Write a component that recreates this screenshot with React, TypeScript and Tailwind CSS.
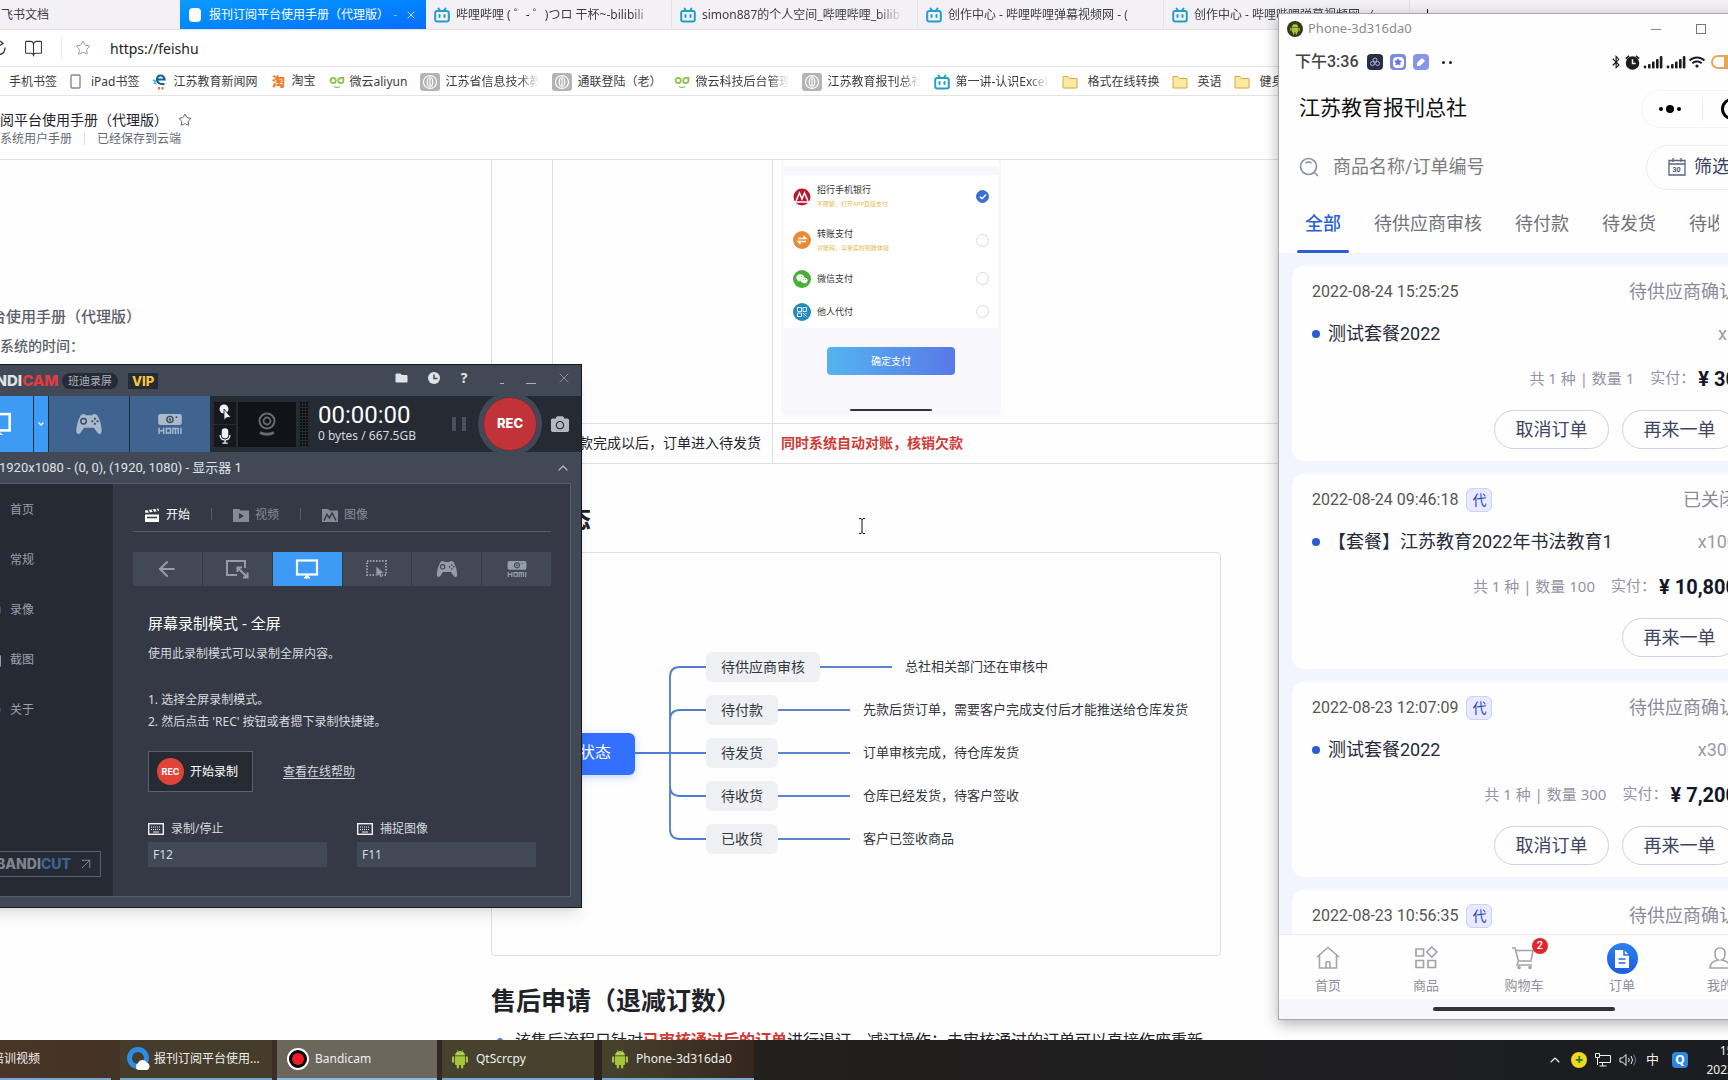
import React from 'react';
import {
  ArrowLeft,
  ArrowUpRight,
  BookOpen,
  Check,
  ChevronDown,
  ChevronUp,
  CircleHelp,
  House,
  Settings,
  Star,
  Video,
  X,
} from 'lucide-react';
import { FaBluetoothB, FaCamera, FaFolder, FaWeixin, FaWifi } from 'react-icons/fa';

/* ---------- icons ---------- */

const BiliIcon = () => (
  <svg viewBox="0 0 16 16" className="h-4 w-4 shrink-0" fill="none" stroke="#23a0c8" strokeWidth="2">
    <path d="M4.500 1.500l1.500 2M11.500 1.500l-1.500 2" strokeLinecap="round" />
    <rect x="1.200" y="4" width="13.600" height="10.500" rx="2" />
    <path d="M5.500 8v2M10.500 8v2" strokeLinecap="round" />
  </svg>
);

const AndroidIcon = ({ className }: { className: string }) => (
  <svg viewBox="0 0 16 20" className={className} fill="#a4c639">
    <path d="M3 6.500a5 4.500 0 0110 0zM3 7.300h10v7.700q0 1-1 1H4q-1 0-1-1z" />
    <rect x="0" y="7.300" width="2.200" height="6.500" rx="1.100" />
    <rect x="13.800" y="7.300" width="2.200" height="6.500" rx="1.100" />
    <rect x="4.700" y="13" width="2.300" height="6.500" rx="1.100" />
    <rect x="9" y="13" width="2.300" height="6.500" rx="1.100" />
    <path d="M5 .8l1.200 2M11 .8l-1.200 2" stroke="#a4c639" strokeWidth=".7" />
    <circle cx="5.900" cy="4.600" r=".6" fill="#fff" />
    <circle cx="10.100" cy="4.600" r=".6" fill="#fff" />
  </svg>
);

const PadIcon = ({ className }: { className: string }) => (
  <svg viewBox="0 0 28 22" className={className}>
    <path
      d="M5 1.500q1.500-1.500 4-1.500l1.500 1.500h7L19 0q2.500 0 4 1.500Q27.500 9 28 18q0 4-2.500 4-1.500 0-3-2.500L19.500 15h-11l-3 4.500Q4 22 2.500 22 0 22 0 18 .5 9 5 1.500z"
      fill="currentColor"
    />
    <circle cx="8" cy="8" r="3" fill="none" stroke="#3b4a60" strokeWidth="1.600" />
    <g fill="#3b4a60">
      <circle cx="20.500" cy="5.200" r="1.200" />
      <circle cx="20.500" cy="10.800" r="1.200" />
      <circle cx="17.700" cy="8" r="1.200" />
      <circle cx="23.300" cy="8" r="1.200" />
    </g>
  </svg>
);

const GlobeIcon = () => (
  <svg viewBox="0 0 20 18" className="h-[18px] w-5 shrink-0">
    <rect width="20" height="18" rx="3" fill="#b4b4b4" />
    <g fill="none" stroke="#fff" strokeWidth="1.200">
      <circle cx="10" cy="9" r="6.500" />
      <path d="M8.500 4.500q-2.500 4.500 0 9M11.500 4.500q2.500 4.500 0 9M10 3v12" />
    </g>
  </svg>
);

const OwlIcon = () => (
  <svg viewBox="0 0 16 14" className="h-[14px] w-4 shrink-0" fill="none" stroke="#8bc34a" strokeWidth="1.800">
    <ellipse cx="4.200" cy="5.500" rx="2.600" ry="2.600" />
    <path d="M14.400 3q-5-1-5.200 2.500 0 2.600 2.600 2.600t2.600-2.600z" />
    <path d="M5 11.500q3 2 6 0" strokeWidth="1.300" />
  </svg>
);

const TabletIcon = () => (
  <svg viewBox="0 0 12 16" className="h-4 w-3 shrink-0" fill="none" stroke="#8a8a8a">
    <rect x="1" y="1" width="9" height="13" rx="1" strokeWidth="1.400" />
  </svg>
);

const NewsIcon = () => (
  <svg viewBox="0 0 16 16" className="h-4 w-4 shrink-0" fill="none">
    <path d="M5 5.500h7.500q-.5-4-4-4T5 6q.5 4.500 7.500 4" stroke="#14618f" strokeWidth="2.200" />
    <path d="M1 6l3 1.500M1.500 9l3 .5" stroke="#48a3d0" strokeWidth="1.500" />
    <path d="M7 13v2.500M10.500 13v2.500" stroke="#e0662c" strokeWidth="1.800" />
  </svg>
);

const FolderIcon = () => (
  <svg viewBox="0 0 16 14" className="h-[14px] w-4 shrink-0">
    <path d="M1 1.500h5l1.500 2H15v9.500H1z" fill="#fdeaa0" stroke="#d2ab3e" />
  </svg>
);

const MonitorIcon = ({ className }: { className: string }) => (
  <svg viewBox="0 0 24 20" className={className} fill="none" stroke="currentColor" strokeWidth="2.200">
    <rect x="2" y="1.500" width="20" height="14" />
    <path d="M9 19l3-3 3 3z" fill="currentColor" strokeWidth="1" />
  </svg>
);

const HdmiIcon = ({ className }: { className: string }) => (
  <svg viewBox="0 0 28 22" className={className} fill="none" stroke="currentColor">
    <rect x="1" y="0" width="26" height="12" rx="2.500" fill="currentColor" stroke="none" />
    <circle cx="14" cy="6" r="3.400" stroke="#3b4a60" strokeWidth="1.500" />
    <circle cx="14" cy="6" r="1.300" fill="#3b4a60" stroke="none" />
    <circle cx="21" cy="3.500" r="1" fill="#3b4a60" stroke="none" />
    <path d="M2 15v7M2 18.500h5M7 15v7M10 16h4.500v5H10zM17 22v-6h6v6M20 16v6M26 15v7" strokeWidth="1.600" />
  </svg>
);

const CursorRectIcon = () => (
  <svg viewBox="0 0 24 20" className="h-5 w-6" fill="none" stroke="currentColor">
    <rect x="2" y="2" width="19" height="14" strokeWidth="2" strokeDasharray="1.500 1.500" />
    <path d="M11 7v11l3-2.500 1.500 3.500 2-1-1.500-3.500h3.500z" fill="currentColor" stroke="#424956" strokeWidth=".7" />
  </svg>
);

const ResizeIcon = () => (
  <svg viewBox="0 0 24 20" className="h-5 w-6" fill="none" stroke="currentColor" strokeWidth="2">
    <path d="M12 16H2V2h18v7" />
    <path d="M13 9l9 9M12.500 13V8.500H17M22.500 13.500V18.500H18" />
  </svg>
);

const ClapperIcon = () => (
  <svg viewBox="0 0 16 15" className="h-[15px] w-4" fill="currentColor">
    <path d="M1 6.500h14V14H1zM1 2.500l13.500-2 .4 2.600-13.500 2z" />
    <path d="M4 2l1.500 2.500M8 1.400l1.500 2.500M12 .8l1.500 2.500M3 9.500h10" stroke="#343945" strokeWidth="1.300" />
  </svg>
);

const VideoFolderIcon = () => (
  <svg viewBox="0 0 16 14" className="h-[14px] w-4">
    <path d="M0 1h6l1.500 1.500H16V14H0z" fill="currentColor" />
    <path d="M6 5l5 3-5 3z" fill="#343945" />
  </svg>
);

const ImageFolderIcon = () => (
  <svg viewBox="0 0 16 14" className="h-[14px] w-4">
    <path d="M0 1h6l1.500 1.500H16V14H0z" fill="currentColor" />
    <path d="M2 12.500l3-6 2.500 3.500 2.500-5 4 7.500" fill="none" stroke="#343945" strokeWidth="1.500" />
  </svg>
);

const KeyboardIcon = () => (
  <svg viewBox="0 0 16 12" className="h-3 w-4" fill="none" stroke="#f0f1f3">
    <rect x=".7" y=".7" width="14.600" height="10.600" strokeWidth="1.400" />
    <path d="M3 4h10M3 6.500h10" strokeDasharray="1 1" />
    <path d="M5 9h6" />
  </svg>
);

const SignalIcon = () => (
  <svg viewBox="0 0 20 13" className="h-[13px] w-5" fill="#1c1c1c">
    <circle cx="2" cy="11" r="1.400" />
    <rect x="5" y="8" width="2.600" height="4.500" rx="1" />
    <rect x="9" y="5.500" width="2.600" height="7" rx="1" />
    <rect x="13" y="3" width="2.600" height="9.500" rx="1" />
    <rect x="16.800" y="0" width="2.600" height="12.500" rx="1" />
  </svg>
);

/* ---------- browser ---------- */

const tabs = [
  '哔哩哔哩 ( ゜- ゜)つロ 干杯~-bilibili',
  'simon887的个人空间_哔哩哔哩_bilibili',
  '创作中心 - 哔哩哔哩弹幕视频网 - (',
  '创作中心 - 哔哩哔哩弹幕视频网 - (',
];

const bookmarks: { icon?: React.ReactNode; label: string; fade?: boolean }[] = [
  { label: '手机书签' },
  { icon: <span className="pr-1"><TabletIcon /></span>, label: 'iPad书签' },
  { icon: <NewsIcon />, label: '江苏教育新闻网' },
  { icon: <span className="w-4 text-center text-[13px] font-black text-[#f07a2c]">淘</span>, label: '淘宝' },
  { icon: <OwlIcon />, label: '微云aliyun' },
  { icon: <GlobeIcon />, label: '江苏省信息技术教育', fade: true },
  { icon: <GlobeIcon />, label: '通联登陆（老）' },
  { icon: <OwlIcon />, label: '微云科技后台管理系', fade: true },
  { icon: <GlobeIcon />, label: '江苏教育报刊总社官', fade: true },
  { icon: <BiliIcon />, label: '第一讲-认识Excel-哔', fade: true },
  { icon: <span className="pr-1"><FolderIcon /></span>, label: '格式在线转换' },
  { icon: <span className="pr-1"><FolderIcon /></span>, label: '英语' },
  { icon: <span className="pr-1"><FolderIcon /></span>, label: '健身' },
];

const BrowserChrome = () => (
  <header className="shrink-0 text-xs text-[#3c3c3c]">
    <nav className="flex h-[30px] items-center overflow-hidden border-b border-[#e2e1e6] bg-[#f3f1f6]">
      <a href="#feishu" className="w-[180px] shrink-0 pl-px">飞书文档</a>
      <div className="flex h-[30px] w-[246px] shrink-0 items-center bg-linear-to-br from-[#0c9bff] to-[#0a6cff] px-[9px] text-white">
        <span className="h-[14px] w-3 shrink-0 rounded-sm bg-white" />
        <span className="ml-2 flex-1 whitespace-nowrap">报刊订阅平台使用手册（代理版）</span>
        <span className="mr-2 text-white/60">-</span>
        <button aria-label="关闭标签"><X className="h-3 w-3" strokeWidth={1.5} /></button>
      </div>
      {tabs.map((title, i) => (
        <a
          key={i}
          href="#tab"
          className="flex h-full w-[246px] shrink-0 items-center gap-[6px] border-r border-[#e4e2e9] px-2"
        >
          <BiliIcon />
          <span className="w-[200px] overflow-hidden whitespace-nowrap [mask-image:linear-gradient(to_right,black_88%,transparent)]">
            {title}
          </span>
        </a>
      ))}
      <span className="ml-[17px] h-3 w-px bg-black" />
    </nav>

    <div className="flex h-9 items-center bg-white">
      <svg viewBox="0 0 8 16" className="h-4 w-2 shrink-0" fill="none" stroke="#333" strokeWidth="1.300">
        <path d="M0 14.500q5-1 5-7M0 1l3 2.500L0 5.500" />
      </svg>
      <BookOpen className="ml-4 h-[19px] w-[19px] text-[#333]" strokeWidth={1.3} />
      <span className="ml-[18px] h-6 w-px bg-[#ececec]" />
      <Star className="ml-[13px] h-4 w-4 text-[#8a8a8a]" strokeWidth={1.3} />
      <input
        aria-label="地址栏"
        defaultValue="https://feishu"
        className="ml-[19px] flex-1 bg-transparent pt-px text-sm text-[#222] outline-none"
      />
    </div>

    <nav className="flex h-[30px] items-center gap-[13px] overflow-hidden border-y border-[#e4e4e4] bg-white pt-px pl-[9px]">
      {bookmarks.map(({ icon, label, fade }) => (
        <a key={label} href="#bookmark" className="flex shrink-0 items-center gap-[5px] whitespace-nowrap">
          {icon}
          <span
            className={
              fade
                ? 'w-[94px] overflow-hidden [mask-image:linear-gradient(to_right,black_78%,transparent)]'
                : ''
            }
          >
            {label}
          </span>
        </a>
      ))}
    </nav>
  </header>
);

/* ---------- document ---------- */

const payments = [
  {
    name: '招行手机银行',
    hint: '不限额，打开APP直接支付',
    checked: true,
    row: 'h-[43px]',
    icon: (
      <svg viewBox="0 0 18 18" className="h-[18px] w-[18px]">
        <circle cx="9" cy="9" r="8.500" fill="#b8182d" />
        <path d="M3 13L6.500 5l2.500 6 2.500-6L15 13M2 14h14" fill="none" stroke="#fff" strokeWidth="1.500" />
      </svg>
    ),
  },
  {
    name: '转账支付',
    hint: '对账码，享受实时到账体验',
    checked: false,
    row: 'h-11',
    icon: (
      <svg viewBox="0 0 18 18" className="h-[18px] w-[18px]">
        <circle cx="9" cy="9" r="9" fill="#e98b35" />
        <path d="M5 7.500h8l-2.500-2.500M13 10.500H5L7.500 13" fill="none" stroke="#fff" strokeWidth="1.400" />
      </svg>
    ),
  },
  {
    name: '微信支付',
    hint: '',
    checked: false,
    row: 'h-[33px]',
    icon: (
      <span className="flex h-[18px] w-[18px] items-center justify-center rounded-full bg-[#45b035] text-white">
        <FaWeixin className="h-3 w-3" />
      </span>
    ),
  },
  {
    name: '他人代付',
    hint: '',
    checked: false,
    row: 'h-[33px]',
    icon: (
      <svg viewBox="0 0 18 18" className="h-[18px] w-[18px]">
        <circle cx="9" cy="9" r="9" fill="#2489bd" />
        <path d="M4.500 4.500h4v4h-4zM10 4.500h3.500v4H10zM4.500 10h4v3.500h-4zM10 10l3.500 3.500M10.500 13h1M13 10v1" fill="none" stroke="#d8eef8" />
      </svg>
    ),
  },
];

const PaymentShot = () => (
  <div className="w-[220px] bg-[#f8f7fb] px-[3px] pb-1">
    <div className="h-[6px] bg-white" />
    <fieldset className="mt-[9px] bg-white">
      {payments.map((p) => (
        <label key={p.name} className={`flex items-center pr-[9px] pl-[9px] ${p.row}`}>
          {p.icon}
          <span className="ml-[6px] flex flex-1 flex-col gap-[5px] text-[9px] leading-[10px] text-[#333]">
            {p.name}
            {p.hint && <small className="text-[6px] leading-[8px] text-[#e3b94c]">{p.hint}</small>}
          </span>
          <span className="grid place-items-center">
            <input
              type="radio"
              name="pay"
              defaultChecked={p.checked}
              className="col-start-1 row-start-1 h-[13px] w-[13px] appearance-none rounded-full border border-[#d9d9df] checked:border-[#3b6fd8] checked:bg-[#3b6fd8]"
            />
            {p.checked && <Check className="col-start-1 row-start-1 h-2 w-2 text-white" strokeWidth={4} />}
          </span>
        </label>
      ))}
    </fieldset>
    <button className="mx-auto mt-[19px] block h-7 w-32 rounded-sm bg-linear-to-r from-[#54b4ef] to-[#5878e8] text-[10px] text-white">
      确定支付
    </button>
    <div className="mx-auto mt-[34px] h-[2px] w-[82px] rounded-full bg-[#333]" />
  </div>
);

const branches = [
  { name: '待供应商审核', note: '总社相关部门还在审核中', pos: 'top-[99px]' },
  { name: '待付款', note: '先款后货订单，需要客户完成支付后才能推送给仓库发货', pos: 'top-[142px]' },
  { name: '待发货', note: '订单审核完成，待仓库发货', pos: 'top-[185px]' },
  { name: '待收货', note: '仓库已经发货，待客户签收', pos: 'top-[228px]' },
  { name: '已收货', note: '客户已签收商品', pos: 'top-[271px]' },
];

const MindMap = () => (
  <div className="relative h-[404px] max-w-[730px] rounded border border-[#dee0e3]">
    <svg viewBox="0 0 80 180" className="absolute top-[110px] left-[140px] h-[180px] w-20" fill="none" stroke="#4f7ccf" strokeWidth="1.800">
      <path d="M0 90h74M74 4H48q-10 0-10 10v152q0 10 10 10h26M74 47H48q-10 0-10 10M74 133H48q-10 0-10-10" />
    </svg>
    <div className="absolute top-[180px] left-[31px] flex h-[42px] w-28 items-center justify-center rounded-md bg-[#3370ff] text-base text-white shadow-[0_2px_8px_rgba(51,112,255,0.3)]">
      <span className="-mt-1">订单状态</span>
    </div>
    {branches.map((b) => (
      <div key={b.name} className={`absolute left-[214px] flex items-center whitespace-nowrap ${b.pos}`}>
        <span className="flex h-[30px] items-center rounded-md bg-[#eff0f3] px-[15px] text-sm text-[#33363c]">{b.name}</span>
        <span className="h-[2px] w-[72px] bg-[#5a84d2]" />
        <span className="ml-[13px] text-[13px] text-[#33363c]">{b.note}</span>
      </div>
    ))}
  </div>
);

const DocPage = () => (
  <>
    <div className="flex h-16 shrink-0 flex-col justify-center border-b border-[#dee0e3] bg-white pt-0.5">
      <div className="flex items-center text-sm leading-5 text-[#1f2329]">
        <span className="w-[178px] whitespace-nowrap">阅平台使用手册（代理版）</span>
        <Star className="h-[14px] w-[14px] text-[#555]" strokeWidth={1.6} />
      </div>
      <div className="flex items-center gap-3 text-xs leading-[18px] text-[#646a73]">
        <span>系统用户手册</span>
        <span className="h-3 w-px bg-[#dee0e3]" />
        <span>已经保存到云端</span>
      </div>
    </div>

    <div className="flex min-h-0 flex-1 overflow-hidden bg-[#fefefe]">
      <aside className="w-[491px] shrink-0 pt-[140px] font-medium text-[#5a6069]">
        <a href="#manual" className="-ml-[9px] block text-[15px] leading-8">台使用手册（代理版）</a>
        <a href="#time" className="block text-sm leading-7">系统的时间：</a>
      </aside>
      <main className="min-w-0 flex-1 text-sm text-[#1f2329]">
        <table className="w-full table-fixed border-collapse">
          <tbody>
            <tr className="h-[263px] align-top">
              <td className="w-[61px] border-x border-[#dee0e3]" />
              <td className="w-[220px] border-r border-[#dee0e3]" />
              <td className="pl-2"><PaymentShot /></td>
            </tr>
            <tr className="h-10">
              <td className="border border-[#dee0e3]" />
              <td className="border border-[#dee0e3] pr-[11px] text-right whitespace-nowrap">欠款完成以后，订单进入待发货</td>
              <td className="border border-[#dee0e3] pl-2 font-bold text-[#d03a35]">同时系统自动对账，核销欠款</td>
            </tr>
          </tbody>
        </table>

        <h2 className="mt-[34px] mb-[14px] text-[25px] leading-10 font-bold">订单状态</h2>
        <MindMap />
        <h2 className="mt-6 mb-2 text-[25px] leading-10 font-bold">售后申请（退减订数）</h2>
        <ul className="list-disc pl-6 text-base leading-6 whitespace-nowrap marker:text-[#4f7ccf]">
          <li>
            该售后流程只针对<strong className="text-[#d03a35]">已审核通过后的订单</strong>进行退订、减订操作；未审核通过的订单可以直接作废重新
          </li>
        </ul>
      </main>
    </div>
  </>
);

/* ---------- recorder window ---------- */

const sideItems = [
  { label: '首页', icon: <House className="h-4 w-4" />, tone: 'text-white' },
  { label: '常规', icon: <Settings className="h-4 w-4" />, tone: '' },
  { label: '录像', icon: <Video className="h-4 w-4" />, tone: '' },
  { label: '截图', icon: <FaCamera className="h-4 w-4" />, tone: '' },
  { label: '关于', icon: <CircleHelp className="h-4 w-4" />, tone: '' },
];

const modes = [
  { name: '返回', icon: <ArrowLeft className="h-6 w-6" strokeWidth={2} /> },
  { name: '自定义区域', icon: <ResizeIcon /> },
  { name: '全屏', icon: <MonitorIcon className="h-5 w-6" /> },
  { name: '鼠标周围', icon: <CursorRectIcon /> },
  { name: '游戏', icon: <PadIcon className="h-4 w-[22px]" /> },
  { name: '设备', icon: <HdmiIcon className="h-4 w-[22px]" /> },
];

const Recorder = () => (
  <section className="absolute top-[364px] -left-12 flex w-[630px] flex-col border border-[#15181d] bg-[#424956] text-xs text-[#d6d9de] shadow-lg">
    <div className="flex h-[31px] items-center pr-[9px] pl-[21px]">
      <span className="w-[84px] text-right font-[Inter] text-[15px] leading-4 font-extrabold text-[#dfe2e6]">
        BANDI<span className="text-[#e23c43]">CAM</span>
      </span>
      <span className="ml-1 rounded-full bg-[#262a33] px-[6px] text-[11px] leading-4 text-[#a9b0bd]">班迪录屏</span>
      <span className="ml-[10px] bg-[#262a33] px-1 font-[Inter] text-[13px] leading-4 font-extrabold text-[#f7c53d]">VIP</span>
      <div className="ml-auto flex items-center gap-5 pb-[6px] text-[#dfe2e6]">
        <button aria-label="文件夹"><FaFolder className="h-3 w-[13px]" /></button>
        <button aria-label="定时">
          <svg viewBox="0 0 12 12" className="h-3 w-3">
            <circle cx="6" cy="6" r="6" fill="currentColor" />
            <path d="M6 2.500V6.500H9.500" fill="none" stroke="#424956" strokeWidth="1.500" />
          </svg>
        </button>
        <button aria-label="帮助" className="w-2 text-sm leading-4 font-bold">?</button>
      </div>
      <div className="flex items-center pb-[6px] pl-[32px] text-[#aab0ba]">
        <button aria-label="迷你模式" className="h-3 w-1 border-b border-current" />
        <button aria-label="最小化" className="ml-[22px] h-3 w-[10px] border-b border-current" />
        <button aria-label="关闭" className="ml-[20px]"><X className="h-4 w-4" strokeWidth={1} /></button>
      </div>
    </div>

    <div className="flex h-[56px] bg-[#262a33]">
      <button aria-label="屏幕" className="ml-[9px] flex w-[71px] items-center justify-center bg-[#3d9bf5] text-white">
        <MonitorIcon className="h-6 w-7" />
      </button>
      <button aria-label="选项" className="ml-px flex w-[14px] items-center justify-center bg-[#3d9bf5] text-white">
        <ChevronDown className="h-2 w-2" strokeWidth={4} />
      </button>
      <button aria-label="游戏" className="ml-px flex w-20 items-center justify-center bg-[#3f648f] text-[#a9b8cb]">
        <PadIcon className="h-5 w-[26px]" />
      </button>
      <button aria-label="设备" className="ml-px flex w-20 items-center justify-center bg-[#3f648f] text-[#a9b8cb]">
        <HdmiIcon className="h-5 w-[26px]" />
      </button>
      <div className="ml-[4px] flex flex-col justify-center gap-px">
        <button aria-label="鼠标" className="flex h-[22px] w-[22px] items-center justify-center bg-[#15181d]">
          <svg viewBox="0 0 16 18" className="h-[18px] w-4" fill="#f2f3f5">
            <circle cx="7" cy="5" r="4.500" />
            <path d="M7 5v11l3-2.500h4z" stroke="#15181d" strokeWidth=".8" />
          </svg>
        </button>
        <button aria-label="麦克风" className="flex h-[22px] w-[22px] items-center justify-center bg-[#15181d]">
          <svg viewBox="0 0 14 18" className="h-4 w-[14px]" fill="none" stroke="#f2f3f5" strokeWidth="1.400">
            <rect x="4" y="1" width="6" height="10" rx="3" fill="#f2f3f5" />
            <path d="M1.500 8q0 5.500 5.500 5.500T12.500 8M7 13.500V17M4 17h6" />
          </svg>
        </button>
      </div>
      <div className="my-auto ml-[2px] flex h-[45px] w-[58px] items-center justify-center bg-[#111318]">
        <svg viewBox="0 0 18 24" className="h-6 w-[18px]" fill="none" stroke="#666b74">
          <circle cx="9" cy="9" r="7.500" strokeWidth="2" />
          <circle cx="9" cy="9" r="3.500" strokeWidth="1.800" />
          <path d="M2 20.500q7 3.500 14 0" strokeWidth="3" />
        </svg>
      </div>
      <svg viewBox="0 0 8 45" className="my-auto ml-[4px] h-[45px] w-2" fill="none" stroke="#0a0b0e" strokeWidth="2">
        <path d="M1 0v45M4 0v45M7 0v45" strokeDasharray="2 1" />
      </svg>
      <div className="ml-[10px] w-[126px] pt-2">
        <div className="font-[Roboto] text-2xl leading-[22px] text-white">00:00:00</div>
        <div className="text-xs leading-5">0 bytes / 667.5GB</div>
      </div>
      <button aria-label="暂停" className="my-auto ml-2 flex gap-[6px]">
        <span className="h-[14px] w-1 bg-[#4a505b]" />
        <span className="h-[14px] w-1 bg-[#4a505b]" />
      </button>
      <div className="-my-1 ml-[12px] grid h-[64px] w-[64px] shrink-0 place-items-center rounded-full bg-[#424956]">
        <button className="h-[54px] w-[54px] rounded-full border border-[#7b2a34] bg-[#c03439] font-[Inter] text-[13px] font-extrabold text-white">
          REC
        </button>
      </div>
      <button aria-label="截图" className="ml-[9px] text-[#b3b8c1]"><FaCamera className="h-[18px] w-[18px]" /></button>
    </div>

    <div className="flex h-[31px] items-center justify-between pr-[10px] pl-[46px] text-[#dfe2e6]">
      <span className="font-[Roboto,'Noto_Sans_CJK_SC',sans-serif] text-[13px]">1920x1080 - (0, 0), (1920, 1080) - 显示器 1</span>
      <ChevronUp className="h-4 w-4 text-[#b3b8c1]" strokeWidth={1.8} />
    </div>

    <div className="mx-[10px] mb-[10px] flex h-[414px] border border-[#565c68]">
      <aside className="flex w-[149px] flex-col bg-[#262a33] pt-px text-[#9aa0ab]">
        {sideItems.map((item) => (
          <a key={item.label} href="#section" className="flex h-[50px] items-center pl-[21px]">
            <span className={item.tone}>{item.icon}</span>
            <span className="ml-[9px]">{item.label}</span>
          </a>
        ))}
        <a
          href="#bandicut"
          className="mt-auto mr-3 mb-[19px] flex h-[26px] items-center justify-end gap-[6px] border border-[#5b616c] pr-[5px] font-[Inter] text-sm font-extrabold text-[#7f858f]"
        >
          <span>BANDI<span className="text-[#3c6397]">CUT</span></span>
          <ArrowUpRight className="h-[18px] w-[18px]" strokeWidth={1.3} />
        </a>
      </aside>

      <div className="flex-1 bg-[#343945] pr-[19px] pl-5">
        <div className="flex h-12 items-end gap-[21px] border-b border-[#565c68] pb-2 pl-[11px] text-[#858b96]">
          <button className="flex items-center gap-[6px] text-white"><ClapperIcon />开始</button>
          <span className="mb-[3px] h-3 w-px bg-[#565c68]" />
          <button className="flex items-center gap-[6px]"><VideoFolderIcon />视频</button>
          <span className="mb-[3px] h-3 w-px bg-[#565c68]" />
          <button className="flex items-center gap-[6px]"><ImageFolderIcon />图像</button>
        </div>
        <div className="mt-5 grid h-[34px] grid-cols-6 gap-px">
          {modes.map((m) => (
            <button
              key={m.name}
              aria-label={m.name}
              className={
                m.name === '全屏'
                  ? 'flex items-center justify-center bg-[#3d9bf5] text-white'
                  : 'flex items-center justify-center bg-[#424956] text-[#979da8]'
              }
            >
              {m.icon}
            </button>
          ))}
        </div>
        <div className="pl-[15px]">
          <h3 className="mt-[25px] text-[15px] leading-6 text-white">屏幕录制模式 - 全屏</h3>
          <p className="mt-2 leading-[22px]">使用此录制模式可以录制全屏内容。</p>
          <p className="mt-6 leading-[22px]">1. 选择全屏录制模式。</p>
          <p className="leading-[22px]">2. 然后点击 'REC' 按钮或者摁下录制快捷键。</p>
          <div className="mt-[18px] flex items-center">
            <button className="flex h-[41px] w-[105px] items-center gap-[6px] border border-[#5b616c] bg-[#262a33] pl-2 text-white">
              <span className="flex h-[27px] w-[27px] items-center justify-center rounded-full bg-[#e04338] font-[Inter] text-[9px] font-bold">REC</span>
              开始录制
            </button>
            <a href="#help" className="ml-[30px] underline underline-offset-2">查看在线帮助</a>
          </div>
          <div className="mt-[28px] grid grid-cols-2 gap-[30px] pr-[15px]">
            <label className="block">
              <span className="flex items-center gap-[7px] leading-[18px]"><KeyboardIcon />录制/停止</span>
              <input readOnly defaultValue="F12" className="mt-1 h-[25px] w-full bg-[#424956] px-[5px] text-xs outline-none" />
            </label>
            <label className="block">
              <span className="flex items-center gap-[7px] leading-[18px]"><KeyboardIcon />捕捉图像</span>
              <input readOnly defaultValue="F11" className="mt-1 h-[25px] w-full bg-[#424956] px-[5px] text-xs outline-none" />
            </label>
          </div>
        </div>
      </div>
    </div>
  </section>
);

/* ---------- phone window ---------- */

const orders = [
  { date: '2022-08-24 15:25:25', agent: false, status: '待供应商确认', title: '测试套餐2022', qty: '1', price: '30', cancel: true },
  { date: '2022-08-24 09:46:18', agent: true, status: '已关闭', title: '【套餐】江苏教育2022年书法教育1', qty: '100', price: '10,800', cancel: false },
  { date: '2022-08-23 12:07:09', agent: true, status: '待供应商确认', title: '测试套餐2022', qty: '300', price: '7,200', cancel: true },
];

const OrderHead = ({ date, agent, status }: { date: string; agent: boolean; status: string }) => (
  <div className="flex h-7 items-center">
    <time className="text-base text-[#555]">{date}</time>
    {agent && (
      <span className="ml-2 rounded-md border border-[#cdd2f8] bg-[#e8eafd] px-[5px] text-sm leading-[22px] text-[#3445c4]">代</span>
    )}
    <span className="ml-auto text-[#8b8b9b]">{status}</span>
  </div>
);

const OrderCard = ({ order }: { order: (typeof orders)[number] }) => (
  <article className="shrink-0 rounded-xl bg-[#fefefe] py-3 pr-[19px] pl-5 text-lg">
    <OrderHead {...order} />
    <div className="mt-[14px] flex h-7 items-center">
      <span className="h-2 w-2 rounded-full bg-[#2a5bd7]" />
      <h4 className="ml-2 text-[#262a38]">{order.title}</h4>
      <span className="ml-auto text-[#9a9aa8]">x{order.qty}</span>
    </div>
    <div className="mt-[17px] flex h-7 items-center justify-end text-[15px] text-[#9494a4]">
      <span className="font-['Noto_Sans','Noto_Sans_CJK_SC',sans-serif]">共 1 种 | 数量 {order.qty}</span>
      <span className="ml-4">实付：</span>
      <strong className="ml-[3px] text-xl font-bold text-[#14172a]">¥ {order.price}</strong>
    </div>
    <div className="mt-[17px] flex justify-end gap-[13px] text-[#3f4664]">
      {order.cancel && <button className="h-[39px] w-[115px] rounded-full border border-[#cfd1dc]">取消订单</button>}
      <button className="h-[39px] w-[115px] rounded-full border border-[#cfd1dc]">再来一单</button>
    </div>
  </article>
);

const PhoneNav = () => (
  <nav className="grid h-[65px] shrink-0 grid-cols-5 border-t border-[#e8e8ef] bg-[#fefefe] text-[13px] leading-4 text-[#8f8f99]">
    <a href="#home" className="flex flex-col items-center justify-end gap-2 pb-[5px]">
      <svg viewBox="0 0 24 24" className="h-6 w-6" fill="none" stroke="#a3a3ad" strokeWidth="1.600">
        <path d="M1 11L12 1.500 23 11M3.500 9.500V22h17V9.500M10 22v-5q0-1.500 2-1.500t2 1.500v5" />
      </svg>
      首页
    </a>
    <a href="#goods" className="flex flex-col items-center justify-end gap-2 pb-[5px]">
      <svg viewBox="0 0 24 24" className="h-6 w-6" fill="none" stroke="#a3a3ad" strokeWidth="1.700">
        <path d="M2 3h7.500v7H2zM2 14.500h7.500v7H2zM14 14.500h7.500v7H14zM17.800 1l5 5-5 5-5-5z" />
      </svg>
      商品
    </a>
    <a href="#cart" className="relative flex flex-col items-center justify-end gap-2 pb-[5px]">
      <svg viewBox="0 0 24 24" className="h-6 w-6" fill="none" stroke="#a3a3ad" strokeWidth="1.600">
        <path d="M0 2h3l3.500 13H19l2-10.500H4.500M6.500 15L5 19h15" />
        <circle cx="7" cy="21.500" r="1" />
        <circle cx="18" cy="21.500" r="1" />
      </svg>
      购物车
      <span className="absolute top-[3px] left-[57px] flex h-4 w-4 items-center justify-center rounded-full bg-[#e0262e] text-[11px] font-medium text-white">2</span>
    </a>
    <a href="#orders" className="flex flex-col items-center justify-end gap-1 pb-[5px]">
      <span className="flex h-[31px] w-[31px] items-center justify-center rounded-full bg-linear-to-b from-[#2f80ee] to-[#1c5be6]">
        <svg viewBox="0 0 16 18" className="h-[18px] w-4">
          <path d="M1 0h9l5 5v13H1z" fill="#fff" />
          <path d="M10 0v5h5M4.500 9h7M4.500 13h7" fill="none" stroke="#2269e8" strokeWidth="1.500" />
        </svg>
      </span>
      订单
    </a>
    <a href="#me" className="flex flex-col items-center justify-end gap-2 pb-[5px]">
      <svg viewBox="0 0 24 24" className="h-6 w-6" fill="none" stroke="#a3a3ad" strokeWidth="1.600">
        <path d="M12 2q5 0 5 5.500T14 14q8 1.500 8 8H2q0-6.500 8-8-3-1-3-6.500T12 2z" />
      </svg>
      我的
    </a>
  </nav>
);

const Phone = () => (
  <section className="absolute top-[13px] -right-[42px] bottom-[60px] flex w-[492px] flex-col border border-[#a8a8ac] bg-[#fefefe] font-[Roboto,'Noto_Sans_CJK_SC',sans-serif] shadow-[0_4px_14px_rgba(0,0,0,0.3)]">
    <div className="flex h-[30px] shrink-0 items-center pr-[63px] pl-2">
      <span className="flex h-4 w-4 items-center justify-center rounded-full bg-[#33391f]"><AndroidIcon className="h-3 w-[10px]" /></span>
      <span className="ml-[5px] font-['Noto_Sans'] text-[13px] text-[#8a8a8a]">Phone-3d316da0</span>
      <button aria-label="最小化" className="ml-auto h-px w-[10px] bg-[#888]" />
      <button aria-label="最大化" className="ml-[35px] h-[10px] w-[10px] border border-[#777]" />
    </div>

    <div className="flex h-9 shrink-0 items-center pl-4 text-base font-medium text-[#444]">
      <span className="w-[72px]">下午3:36</span>
      <span className="flex h-4 w-4 items-center justify-center rounded bg-[#2b2f45]">
        <svg viewBox="0 0 12 12" className="h-3 w-3" fill="none" stroke="#a9b4e0"><circle cx="6" cy="4" r="2" /><circle cx="3.500" cy="7.500" r="2" /><circle cx="8.500" cy="7.500" r="2" /></svg>
      </span>
      <span className="ml-[7px] flex h-4 w-4 items-center justify-center rounded bg-[#7a8ae0]">
        <span className="flex h-[11px] w-[11px] items-center justify-center rounded-sm bg-white text-[#6376d8]"><Star className="h-2 w-2" fill="currentColor" /></span>
      </span>
      <span className="ml-[7px] flex h-4 w-4 items-center justify-center rounded bg-[#8695ea]">
        <svg viewBox="0 0 12 12" className="h-3 w-3"><path d="M2 7l5-5 3 3-5 5H2z" fill="#fff" /></svg>
      </span>
      <span className="ml-[13px] flex gap-1"><i className="h-[3px] w-[3px] rounded-full bg-[#222]" /><i className="h-[3px] w-[3px] rounded-full bg-[#222]" /></span>
      <span className="ml-auto flex items-center gap-[3px] text-[#1c1c1c]">
        <FaBluetoothB className="h-[14px] w-3" />
        <svg viewBox="0 0 14 14" className="h-[15px] w-[15px]">
          <circle cx="7" cy="7.500" r="6.300" fill="currentColor" />
          <path d="M.8 3.300l3-2.500M13.200 3.300l-3-2.500" stroke="currentColor" strokeWidth="1.500" />
          <path d="M7 4v4h3" fill="none" stroke="#fff" strokeWidth="1.400" />
        </svg>
        <SignalIcon />
        <SignalIcon />
        <FaWifi className="h-[14px] w-4" />
        <span className="ml-[3px] flex h-[14px] w-[58px] rounded-full border-2 border-[#eba557] bg-linear-to-r from-white from-20% to-[#eba557] to-20%" />
      </span>
    </div>

    <div className="flex h-[56px] shrink-0 items-center justify-between pt-px pl-5">
      <h1 className="text-[21px] text-[#111]">江苏教育报刊总社</h1>
      <div className="flex h-[38px] w-[128px] items-center rounded-full border border-[#f4f4f6] pl-[17px]">
        <button aria-label="更多" className="flex w-[43px] items-center gap-[3px]">
          <i className="h-1 w-1 rounded-full bg-black" />
          <i className="h-2 w-2 rounded-full bg-black" />
          <i className="h-1 w-1 rounded-full bg-black" />
        </button>
        <span className="h-6 w-px bg-[#f0f0f2]" />
        <button aria-label="关闭小程序" className="ml-[18px] flex h-[22px] w-[22px] items-center justify-center rounded-full border-[3px] border-black">
          <i className="h-2 w-2 rounded-full bg-black" />
        </button>
      </div>
    </div>

    <div className="flex h-[62px] shrink-0 items-center pl-5">
      <svg viewBox="0 0 20 20" className="h-5 w-5" fill="none" stroke="#8b90a5" strokeWidth="1.600">
        <circle cx="9.500" cy="9.500" r="8" />
        <path d="M15.500 15.500L19 19M6.500 6q3-2 6 0" />
      </svg>
      <input aria-label="搜索订单" placeholder="商品名称/订单编号" className="ml-[14px] w-[240px] bg-transparent text-lg outline-none placeholder:text-[#7c7c80]" />
      <button className="ml-auto flex h-[45px] w-[123px] items-center gap-2 rounded-full border border-[#ececf2] pl-[21px] text-lg text-[#3a4160]">
        <svg viewBox="0 0 18 18" className="h-[18px] w-[18px]" fill="none" stroke="#5b627d" strokeWidth="1.300">
          <path d="M1 2.500h16V17H1zM1 6h16M5 0v4M13 0v4" />
          <text x="4.500" y="14" fontSize="7" fontWeight="700" fill="#4b5270" stroke="none">30</text>
        </svg>
        筛选
      </button>
    </div>

    <div className="flex h-[55px] w-[440px] shrink-0 gap-[33px] overflow-hidden pl-[26px] text-lg whitespace-nowrap text-[#70737c]">
      <button className="relative h-full pb-1 font-medium text-[#2b5fd9]">
        全部
        <span className="absolute -inset-x-2 bottom-0 h-[3px] rounded-full bg-[#2b5fd9]" />
      </button>
      <button className="pb-1">待供应商审核</button>
      <button className="pb-1">待付款</button>
      <button className="pb-1">待发货</button>
      <button className="pb-1">待收货</button>
    </div>

    <div className="flex min-h-0 flex-1 flex-col gap-[13px] overflow-hidden bg-[#f3f5fe] px-[13px] pt-[13px]">
      {orders.map((o) => <OrderCard key={o.date} order={o} />)}
      <article className="flex-1 rounded-t-xl bg-[#fefefe] pt-3 pr-[19px] pl-5 text-lg">
        <OrderHead date="2022-08-23 10:56:35" agent status="待供应商确认" />
      </article>
    </div>

    <PhoneNav />
    <div className="flex h-5 shrink-0 items-center justify-center bg-[#f8f6fa]">
      <span className="h-1 w-[182px] rounded-full bg-[#333]" />
    </div>
  </section>
);

/* ---------- taskbar ---------- */

const Taskbar = () => (
  <footer className="relative flex h-10 shrink-0 items-center overflow-hidden bg-linear-to-r from-[#4a3526] via-[#221f1d] via-45% to-[#1b1d22] text-xs text-[#f0f0f0]">
    <button className="h-full w-[111px] border-b-2 border-[#76a8d0] text-left"><span className="-ml-2">培训视频</span></button>
    <button className="ml-[9px] flex h-full w-[152px] items-center border-b-2 border-[#76a8d0] bg-[#453c2b] pl-[6px]">
      <svg viewBox="0 0 24 24" className="h-6 w-6">
        <circle cx="12" cy="11" r="8.500" fill="none" stroke="#2b8de6" strokeWidth="5" />
        <path d="M12 23a4 4 0 010-7 5 5 0 019-.5A4 4 0 0121 23z" fill="#fff" />
      </svg>
      <span className="ml-1">报刊订阅平台使用...</span>
    </button>
    <button className="ml-[5px] flex h-full w-40 items-center border-b-2 border-[#8cbbe0] bg-[#6b675a] pl-[10px]">
      <span className="flex h-[22px] w-[22px] items-center justify-center rounded-full border-2 border-white bg-black">
        <i className="h-3 w-3 rounded-full bg-[#ee1c24]" />
      </span>
      <span className="ml-[6px]">Bandicam</span>
    </button>
    <button className="ml-[5px] flex h-full w-[152px] items-center border-b-2 border-[#76a8d0] bg-[#47422e] pl-[10px]">
      <AndroidIcon className="h-5 w-4" />
      <span className="ml-2">QtScrcpy</span>
    </button>
    <button className="ml-2 flex h-full w-[152px] items-center border-b-2 border-[#76a8d0] bg-linear-to-r from-[#47422e] to-[#35261e] pl-[10px]">
      <AndroidIcon className="h-5 w-4" />
      <span className="ml-2">Phone-3d316da0</span>
    </button>
    <div className="-mr-[38px] ml-auto flex items-center">
      <ChevronUp className="h-4 w-4" strokeWidth={1.6} />
      <span className="ml-2 flex h-4 w-4 items-center justify-center rounded-full bg-[#f2d91c] text-sm leading-4 font-black text-[#2f7d22]">+</span>
      <svg viewBox="0 0 16 14" className="ml-2 h-[14px] w-4" fill="none" stroke="#f0f0f0">
        <path d="M5 2.500h10.500v7H4M7.500 9.500v3.500M4.500 13h7M.5.5h4v4h-4zM2.500 4.500V12" />
      </svg>
      <svg viewBox="0 0 18 14" className="ml-2 h-[14px] w-[18px]" fill="none" stroke="#f0f0f0">
        <path d="M1 5h2.500L7 1.500v11L3.500 9H1zM9.500 5q1.500 2 0 4M12 3q3 4 0 8" />
        <path d="M14.500 1.500q4 5.500 0 11" stroke="#777" />
      </svg>
      <span className="ml-[9px] text-[13px]">中</span>
      <span className="ml-[13px] flex h-4 w-4 items-center justify-center rounded-sm bg-[#2d86e0] font-bold text-white">Q</span>
      <time className="ml-4 w-[62px] text-center leading-[19px]">15:36<br />2022/8/24</time>
    </div>
  </footer>
);

export default function App() {
  return (
    <div className="relative flex h-screen flex-col overflow-hidden bg-white font-['Noto_Sans','Noto_Sans_CJK_SC',sans-serif]">
      <BrowserChrome />
      <DocPage />
      <svg viewBox="0 0 8 16" className="absolute top-[518px] left-[858px] h-4 w-2" fill="none" stroke="#111">
        <path d="M1 .5h2l1 1 1-1h2M4 1v14M1 15.500h2l1-1 1 1h2" />
      </svg>
      <Recorder />
      <Phone />
      <Taskbar />
    </div>
  );
}
